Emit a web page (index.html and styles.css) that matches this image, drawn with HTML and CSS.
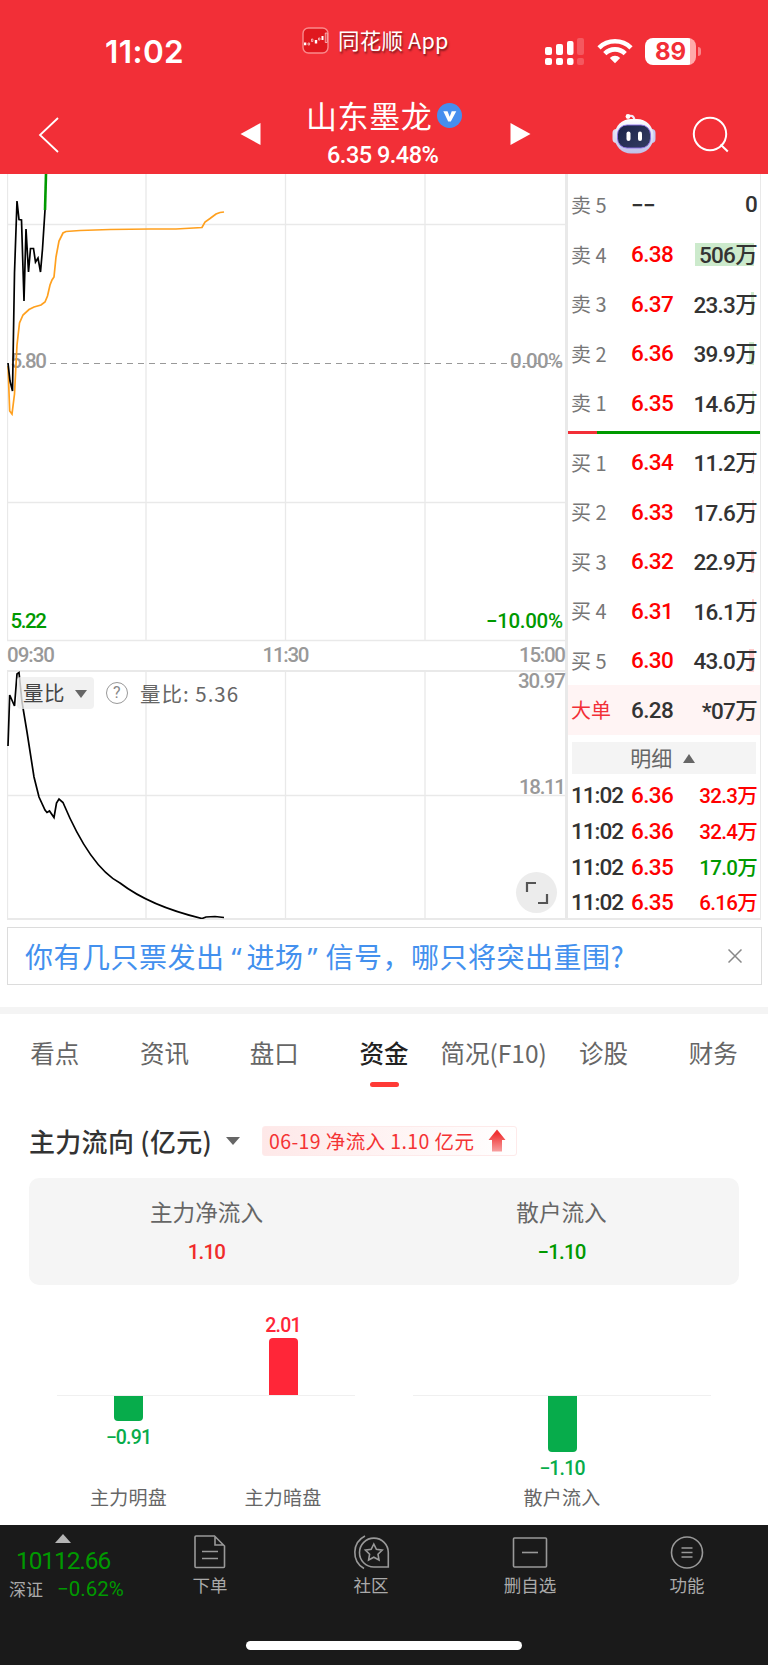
FILE: index.html
```html
<!DOCTYPE html>
<html lang="zh-CN">
<head>
    <meta charset="UTF-8">
    <meta name="viewport" content="width=device-width, initial-scale=1.0">
    <title>山东墨龙 6.35 9.48%</title>
    <link rel="stylesheet" href="styles.css">
</head>
<body>
    <header class="header">
        <div class="status-bar">
            <span class="clock">11:02</span>
            <div class="app-mark">
                <svg width="27" height="27" viewBox="0 0 27 27">
                    <rect x="1" y="1" width="25" height="25" rx="5.5" fill="#e0181f" stroke="#fa8a8c" stroke-width="1.4"/>
                    <path d="M2 15.500h2.300v2.800H2zM12.800 13h2.400v3.600h-2.400zM19.500 9h2v4h-2z" fill="#fff"/>
                    <path d="M6 16h1.600v2H6zM9.500 12h1.400v2.500H9.500zM16.500 11h1.500v2h-1.500zM23.300 6h1.800v9.500h-1.800z" fill="none" stroke="#fff" stroke-width=".6"/>
                </svg>
                <span>同花顺 App</span>
            </div>
            <div class="status-icons">
                <svg class="signal" width="40" height="28" viewBox="0 0 40 28" fill="#fff">
                    <rect x="0" y="9" width="7" height="8" rx="2"/>
                    <rect x="11" y="6" width="7" height="11" rx="2"/>
                    <rect x="22" y="3" width="6.500" height="14" rx="2"/>
                    <rect x="32" y="0" width="7" height="17" rx="2" opacity=".2"/>
                    <rect x="0" y="20" width="7" height="7" rx="2"/>
                    <rect x="11" y="20" width="7" height="7" rx="2"/>
                    <rect x="22" y="20" width="6.500" height="7" rx="2"/>
                    <rect x="32" y="20" width="7" height="7" rx="2" opacity=".2"/>
                </svg>
                <svg class="wifi" width="36" height="26" viewBox="0 0 36 26" fill="none" stroke="#fff" stroke-width="4.600">
                    <path d="M2 9.800a23 23 0 0 1 32 0"/>
                    <path d="M7.800 15.600a14.500 14.500 0 0 1 20.400 0"/>
                    <path d="M18 25.300l-5.200-5.400a7.500 7.500 0 0 1 10.400 0z" fill="#fff" stroke="none"/>
                </svg>
                <div class="battery">89</div>
                <span class="battery-tip"></span>
            </div>
        </div>
        <nav class="nav-bar">
            <svg class="back" width="22" height="38" viewBox="0 0 22 38" fill="none" stroke="#fff" stroke-width="1.800"><path d="M20 2L2 19l18 17"/></svg>
            <svg class="prev" width="21" height="24" viewBox="0 0 21 24" fill="#fff"><path d="M20.500 1v22L.5 12z"/></svg>
            <div class="stock">
                <div class="stock-name">山东墨龙
                    <svg width="25" height="25" viewBox="0 0 25 25"><circle cx="12.500" cy="12.500" r="12.500" fill="#468eee"/><path d="M6.300 8.300h4.200l2.200 5.500 2-5.500h4.600l-5.500 10.300h-2.600z" fill="#fff"/></svg>
                </div>
                <div class="stock-price">6.35 9.48%</div>
            </div>
            <svg class="next" width="21" height="24" viewBox="0 0 21 24" fill="#fff"><path d="M.5 1v22l20-11z"/></svg>
            <svg class="robot" width="44" height="42" viewBox="0 0 44 42">
                <defs>
                    <linearGradient id="shell" x1="0" y1="0" x2="0" y2="1"><stop offset="0" stop-color="#fff"/><stop offset="1" stop-color="#bfbfe8"/></linearGradient>
                    <linearGradient id="face" x1="0" y1="0" x2="1" y2="1"><stop offset="0" stop-color="#1b2348"/><stop offset="1" stop-color="#343c63"/></linearGradient>
                </defs>
                <path d="M16 3.500c3-1.500 6-1 6.500 4" fill="none" stroke="#f2e9f7" stroke-width="2.200"/>
                <circle cx="16" cy="3.500" r="2.400" fill="#fff"/>
                <rect x=".5" y="16" width="8" height="14" rx="4" fill="#dcdcf2"/>
                <rect x="35.500" y="16" width="8" height="14" rx="4" fill="#c6c9f2"/>
                <rect x="2.500" y="6" width="39" height="34.500" rx="16.500" fill="url(#shell)"/>
                <rect x="5.500" y="12" width="33" height="23" rx="9.500" fill="url(#face)" stroke="#8d71e8" stroke-width=".9"/>
                <rect x="14.500" y="18.500" width="4" height="9.500" rx="2" fill="#fff"/>
                <rect x="26" y="18.500" width="4" height="9.500" rx="2" fill="#fff"/>
            </svg>
            <svg class="search" width="38" height="38" viewBox="0 0 38 38" fill="none" stroke="#fff" stroke-width="2"><circle cx="18" cy="18" r="16.200"/><path d="M28.500 28.500l7.300 7"/></svg>
        </nav>
    </header>

    <main>
        <section class="quote">
            <svg class="chart" width="560" height="745" viewBox="7 174 560 745">
                <!-- grid -->
                <g class="grid">
                    <path d="M7.500 174V641M146 174V641M285.500 174V641M425 174V641M7 224.500H566M7 502.500H566M7 640.500H566"/>
                    <path d="M7.500 671V919M146 671V919M285.500 671V919M425 671V919M7 795.500H566"/>
                    <path class="grid-bold" d="M7 671H566M566 174V919"/>
                </g>
                <path class="dash" d="M50 363.500H566"/>

                <text class="num muted" x="10.500" y="367.500" textLength="36.500">5.80</text>
                <text class="num muted" x="563" y="367.500" text-anchor="end" textLength="53">0.00%</text>
                <text class="num down" x="10.500" y="628" textLength="36.500">5.22</text>
                <text class="num down" x="563" y="628" text-anchor="end" textLength="77">−10.00%</text>
                <text class="num muted" x="7" y="662" textLength="48">09:30</text>
                <text class="num muted" x="262.500" y="662" textLength="47">11:30</text>
                <text class="num muted" x="566" y="662" text-anchor="end" textLength="47">15:00</text>
                <text class="num muted" x="566" y="688" text-anchor="end" textLength="48">30.97</text>
                <text class="num muted" x="566" y="793.500" text-anchor="end" textLength="47">18.11</text>

                <!-- price and average -->
                <polyline class="average" points="8,366 9.700,411 12,414 14.500,394 17,345 19.500,323 23,315 29,309.500 34,307 41,305 45,302 47.500,296 50,285 52,280 54,277 56,257 59,241 63,233 66,231.500 80,230.500 110,229.500 150,229 176,229 202,227.500 205,222 210,218.500 216,214 220,212.500 224,212"/>
                <polyline class="price" points="8,363 10,381 12.500,391 14.500,273 17,201 19,219.500 21.500,220 24,301 26,229 28.500,272 30.500,248.500 33.500,248.500 35.500,262 38,258 40.500,272 42.500,249 45,210"/>
                <path class="limit" d="M45 210L46 174"/>

                <!-- volume ratio -->
                <path class="ratio" d="M8 746L9.700 695L14.500 706L17 674L19 672.500L22 702L27 732L34 777L39 797L45 810L47 812.500L49.500 811L54 817.500L56.500 803L59 799L63 802.500Q90 867 120 883Q150 906 202 918.500L206 917L215 916.500L224 917.500" />
            </svg>
            <div class="chart-tools">
                <span class="picker">量比 <i class="caret"></i></span>
                <span class="help">?</span>
                <span class="reading">量比: 5.36</span>
            </div>
            <span class="expand">
                <svg width="24" height="24" viewBox="0 0 24 24" fill="none" stroke="#555" stroke-width="2.200"><path d="M2 11V2h9M22 13v9h-9"/></svg>
            </span>

            <div class="book">
                <div class="row"><span>卖 5</span><b class="dark">−−</b><em>0</em></div>
                <div class="row"><span>卖 4</span><b>6.38</b><em><i class="bar sell" style="width:59px"></i>506万</em></div>
                <div class="row"><span>卖 3</span><b>6.37</b><em><i class="bar sell" style="width:3px"></i>23.3万</em></div>
                <div class="row"><span>卖 2</span><b>6.36</b><em><i class="bar sell" style="width:5px"></i>39.9万</em></div>
                <div class="row"><span>卖 1</span><b>6.35</b><em><i class="bar sell" style="width:2px"></i>14.6万</em></div>
                <div class="ratio-line"></div>
                <div class="row"><span>买 1</span><b>6.34</b><em><i class="bar buy" style="width:1px"></i>11.2万</em></div>
                <div class="row"><span>买 2</span><b>6.33</b><em><i class="bar buy" style="width:2px"></i>17.6万</em></div>
                <div class="row"><span>买 3</span><b>6.32</b><em><i class="bar buy" style="width:3px"></i>22.9万</em></div>
                <div class="row"><span>买 4</span><b>6.31</b><em><i class="bar buy" style="width:2px"></i>16.1万</em></div>
                <div class="row"><span>买 5</span><b>6.30</b><em><i class="bar buy" style="width:5px"></i>43.0万</em></div>
                <div class="row big"><span>大单</span><b class="dark">6.28</b><em>*07万</em></div>
                <div class="detail">明细 <i class="caret up"></i></div>
                <div class="trade"><span>11:02</span><b>6.36</b><em>32.3万</em></div>
                <div class="trade"><span>11:02</span><b>6.36</b><em>32.4万</em></div>
                <div class="trade"><span>11:02</span><b>6.35</b><em class="sold">17.0万</em></div>
                <div class="trade"><span>11:02</span><b>6.35</b><em>6.16万</em></div>
            </div>
        </section>

        <div class="notice">
            <span>你有几只票发出<q class="open">“</q>进场<q class="close">”</q>信号，哪只将突出重围?</span>
            <svg width="14" height="14" viewBox="0 0 14 14" stroke="#888" stroke-width="1.500"><path d="M.5.5l13 13M13.500.5l-13 13"/></svg>
        </div>

        <div class="tabs">
            <a>看点</a><a>资讯</a><a>盘口</a><a class="active">资金</a><a>简况(F10)</a><a>诊股</a><a>财务</a>
        </div>

        <section class="flow">
            <div class="flow-head">
                <h2>主力流向 (亿元)</h2>
                <i class="caret"></i>
                <div class="tag">06-19 净流入 1.10 亿元
                    <svg width="18" height="23" viewBox="0 0 18 23">
                        <defs><linearGradient id="rise" x1="0" y1="0" x2="0" y2="1"><stop offset=".2" stop-color="#f03334"/><stop offset="1" stop-color="#f7a0a0"/></linearGradient></defs>
                        <path d="M9 .5L17.500 11H14v11.500H4V11H.5z" fill="url(#rise)"/>
                    </svg>
                </div>
            </div>
            <div class="summary">
                <div>主力净流入<strong class="in">1.10</strong></div>
                <div>散户流入<strong class="out">−1.10</strong></div>
            </div>
            <div class="bars">
                <div class="group pair">
                    <div class="col"><div class="above"></div><div class="below"><i style="height:25px"></i>−0.91</div><label>主力明盘</label></div>
                    <div class="col hidden-side"><div class="above">2.01<i style="height:57px"></i></div><div class="below"></div><label>主力暗盘</label></div>
                </div>
                <div class="group">
                    <div class="col"><div class="above"></div><div class="below"><i style="height:57px"></i>−1.10</div><label>散户流入</label></div>
                </div>
            </div>
        </section>
    </main>

    <footer class="footer">
        <div class="index">
            <i class="caret up"></i>
            <div class="index-value">10112.66</div>
            <div class="index-line"><span>深证</span><b>−0.62%</b></div>
        </div>
        <a class="item order">
            <svg width="36" height="36" viewBox="0 0 36 36"><path d="M4 2h18.500L32.500 12v20.500a1 1 0 0 1-1 1H4a1 1 0 0 1-1-1V3a1 1 0 0 1 1-1zM23 2.500V11h9M10 17.500h16M10 24.500h16"/></svg>
            下单
        </a>
        <a class="item social">
            <svg width="38" height="36" viewBox="0 0 38 36"><path d="M7.500 18.500a14.300 14.300 0 0 1 28.800 0V33H21.800A14.300 14.300 0 0 1 7.500 18.500z"/><path d="M13 2A18.500 18.500 0 0 0 12 34.500"/><path d="M21.800 10l2.600 5.300 5.800.8-4.200 4.100 1 5.800-5.200-2.800-5.200 2.800 1-5.800-4.200-4.100 5.800-.8z"/></svg>
            社区
        </a>
        <a class="item remove">
            <svg width="36" height="36" viewBox="0 0 36 36"><rect x="1.500" y="4" width="33" height="29" rx="1"/><path d="M10 18.500h16"/></svg>
            删自选
        </a>
        <a class="item more">
            <svg width="36" height="36" viewBox="0 0 36 36"><circle cx="18" cy="18.500" r="15.500"/><path d="M12.500 14h11M12.500 18.500h11M12.500 23h11"/></svg>
            功能
        </a>
        <span class="home-bar"></span>
    </footer>
</body>
</html>
```
FILE: styles.css
```css
:root {
    --red: #f22f37;
    --up: #ff0000;
    --down: #009900;
    --text: #333;
    --muted: #666;
    --line: #e9e9e9;
    --cjk: "Noto Sans CJK SC", sans-serif;
    --num: Roboto, "Noto Sans CJK SC", sans-serif;
}

* {
    margin: 0;
    padding: 0;
    box-sizing: border-box;
}

body {
    width: 768px;
    background: #fff;
    color: var(--text);
    font-family: var(--cjk);
}

i, em {
    font-style: normal;
}

svg {
    display: block;
}

.caret {
    display: inline-block;
    border: 6px solid transparent;
    border-top: 8px solid #666;
    border-bottom: 0;
}

.caret.up {
    border-top: 0;
    border-bottom: 9px solid #666;
}

/* header */
.header {
    height: 174px;
    background: var(--red);
    color: #fff;
}

.status-bar {
    display: flex;
    height: 90px;
    padding-left: 105px;
}

.clock {
    width: 197px;
    padding-top: 32px;
    font: 600 31.5px/40px Inter, sans-serif;
    letter-spacing: 0.4px;
}

.app-mark {
    display: flex;
    gap: 9px;
    width: 243px;
    padding-top: 27px;
    font-size: 21.5px;
    line-height: 25px;
    letter-spacing: 0.2px;
    text-shadow: 1px 2px 2px rgba(0,0,0,0.5);
}

.status-icons {
    display: flex;
    align-items: flex-start;
    padding-top: 38px;
}

.wifi {
    margin-left: 12px;
}

.battery {
    width: 51px;
    height: 27px;
    margin-left: 12px;
    border-radius: 8px;
    background: linear-gradient(90deg, #fff 45px, #faa 45px);
    color: var(--red);
    font: 700 24px/28px Inter, sans-serif;
    text-align: center;
}

.battery-tip {
    width: 3px;
    height: 9px;
    margin: 9px 0 0 2px;
    border-radius: 0 4px 4px 0;
    background: #f9868a;
}

.nav-bar {
    display: flex;
    align-items: flex-start;
    height: 84px;
    padding-left: 38px;
}

.back {
    margin-top: 26px;
}

.prev {
    margin: 32px 0 0 180px;
}

.stock {
    width: 249px;
    padding-left: 45px;
}

.stock-name {
    display: flex;
    align-items: center;
    gap: 5px;
    height: 48px;
    font-size: 31px;
    letter-spacing: 0.6px;
    white-space: nowrap;
}

.stock-name svg {
    margin-top: 3px;
}

.stock-price {
    margin: 3px 0 0 21px;
    font: 500 23.5px/28px var(--num);
    letter-spacing: -0.5px;
}

.next {
    margin-top: 32px;
}

.robot {
    margin: 23px 0 0 81px;
}

.search {
    margin: 26px 0 0 36px;
}

/* quote area */
.quote {
    position: relative;
    display: flex;
    height: 746px;
    margin: 0 7px;
    border-bottom: 2px solid var(--line);
}

.chart {
    flex: none;
}

.grid {
    fill: none;
    stroke: var(--line);
    stroke-width: 1.3;
}

.grid-bold {
    stroke-width: 2;
}

.dash {
    stroke: #999;
    stroke-width: 1.2;
    stroke-dasharray: 6 5;
}

.price, .average, .ratio, .limit {
    fill: none;
    stroke: #000;
    stroke-width: 1.7;
}

.average {
    stroke: #ffa01e;
}

.limit {
    stroke: var(--down);
    stroke-width: 2.6;
}

.num {
    font: 500 20.5px var(--num);
}

.num.muted {
    fill: #999;
}

.num.down {
    fill: var(--down);
}

.chart-tools {
    position: absolute;
    left: 10px;
    top: 503px;
    display: flex;
    align-items: center;
    height: 32px;
    color: #666;
    font-size: 20.5px;
    letter-spacing: 0.4px;
}

.picker {
    width: 77px;
    height: 32px;
    padding-left: 6px;
    border-radius: 4px;
    background: rgba(238,238,238,0.8);
    color: #444;
    line-height: 31px;
}

.picker .caret {
    margin-left: 5px;
    vertical-align: 3px;
}

.help {
    width: 22px;
    height: 22px;
    margin: 0 12px;
    border: 1.5px solid #999;
    border-radius: 50%;
    color: #888;
    font: 16px/19px var(--num);
    text-align: center;
}

.reading {
    letter-spacing: 1px;
}

.expand {
    position: absolute;
    left: 509px;
    top: 698px;
    display: grid;
    place-items: center;
    width: 41px;
    height: 41px;
    border-radius: 50%;
    background: #ececec;
}

.book {
    width: 194px;
    padding-top: 6px;
    border-right: 1px solid var(--line);
    border-left: 1px solid var(--line);
    font-family: var(--num);
}

.row, .trade {
    display: grid;
    grid-template-columns: 60px 54px 1fr;
    align-items: center;
    height: 49.5px;
    padding: 0 3px;
    font-size: 22.5px;
    font-weight: 500;
    white-space: nowrap;
}

.row span {
    color: #777;
    font: 20px var(--cjk);
}

.row b, .trade b {
    color: var(--up);
    font-weight: 500;
    letter-spacing: -0.6px;
}

.row b.dark {
    color: var(--text);
}

.row em, .trade em {
    position: relative;
    padding-bottom: 2px;
    text-align: right;
    letter-spacing: -0.7px;
}

.bar {
    position: absolute;
    right: 3px;
    top: 50%;
    height: 23px;
    margin-top: -11.5px;
    z-index: -1;
}

.sell {
    background: #cceacc;
}

.buy {
    background: #fcc;
}

.ratio-line {
    height: 3.5px;
    margin: 3px 0 3.5px;
    background: linear-gradient(90deg, var(--red) 29px, var(--down) 29px);
}

.big {
    background: #fff4f4;
}

.row.big span {
    color: var(--red);
}

.detail {
    height: 32px;
    margin: 7px 4px 4px;
    background: #f4f4f4;
    color: #666;
    font: 21px/31px var(--cjk);
    text-align: center;
    padding-right: 3px;
}

.detail .caret {
    margin-left: 6px;
    vertical-align: 3px;
}

.trade {
    height: 35.7px;
}

.trade span {
    letter-spacing: -1px;
}

.trade em {
    color: var(--up);
    font-size: 20.5px;
}

.trade em.sold {
    color: var(--down);
}

/* notice */
.notice {
    display: flex;
    align-items: center;
    justify-content: space-between;
    height: 58px;
    margin: 7px 6px 22px 7px;
    padding: 0 19px 0 17px;
    border: 1px solid #dcdcdc;
    color: #4390ee;
    font-size: 28px;
    letter-spacing: 0.5px;
    white-space: nowrap;
}

.notice q {
    display: inline-block;
    width: 22px;
    quotes: none;
    font-family: "Noto Sans", sans-serif;
    line-height: 1;
}

.notice q::before, .notice q::after {
    content: none;
}

.notice .open {
    padding-left: 7px;
}

.notice .close {
    padding-left: 4px;
}

/* tabs */
.tabs {
    display: grid;
    grid-template-columns: repeat(7, 1fr);
    height: 96px;
    padding-top: 21px;
    border-top: 7px solid #f4f4f4;
}

.tabs a {
    position: relative;
    color: #666;
    font-size: 24.5px;
    line-height: 36px;
    text-align: center;
    white-space: nowrap;
}

.tabs .active {
    color: #222;
    font-weight: 500;
}

.tabs .active::after {
    content: '';
    position: absolute;
    left: 50%;
    top: 47px;
    width: 29px;
    height: 5px;
    margin-left: -14px;
    border-radius: 3px;
    background: #ff3a36;
}

/* fund flow */
.flow {
    height: 422px;
    padding: 23px 29px 0;
}

.flow-head {
    display: flex;
    align-items: center;
    height: 30px;
}

.flow-head h2 {
    width: 197px;
    padding-bottom: 2px;
    font-size: 26px;
    font-weight: 500;
    letter-spacing: 0.3px;
    white-space: nowrap;
}

.flow-head .caret {
    border-width: 8px 7px 0;
    margin-right: 22px;
}

.tag {
    display: flex;
    align-items: center;
    justify-content: space-between;
    width: 255px;
    height: 30px;
    padding: 0 10px 1px 6px;
    border: 1px solid #feeaea;
    border-radius: 3px;
    background: linear-gradient(90deg, #fee8e8, #fff);
    color: #f43334;
    font-size: 19.5px;
    letter-spacing: 0.4px;
    white-space: nowrap;
}

.summary {
    display: grid;
    grid-template-columns: 1fr 1fr;
    height: 107px;
    margin-top: 22px;
    border-radius: 10px;
    background: #f5f5f5;
    color: #666;
    font-size: 22.6px;
    line-height: 32px;
    text-align: center;
    padding-top: 18px;
}

.summary strong {
    display: block;
    margin-top: 8px;
    font: 500 20.5px/32px var(--num);
    letter-spacing: -0.8px;
}

.in {
    color: #f02b2b;
}

.out {
    color: var(--down);
}

.bars {
    display: grid;
    grid-template-columns: 298px 298px;
    gap: 58px;
    margin: 27px 28px 0;
}

.group {
    display: grid;
}

.pair {
    grid-template-columns: 143px 155px;
}

.col {
    display: grid;
    grid-template-rows: 84px 85px 32px;
    color: #07ac4b;
    font: 500 19.5px/24px var(--num);
    letter-spacing: -0.8px;
    text-align: center;
}

.above, .below {
    display: flex;
    flex-direction: column;
    align-items: center;
}

.above {
    justify-content: flex-end;
    color: #ff2638;
    border-bottom: 1px solid #f0f0f0;
}

.hidden-side > * {
    padding-left: 11px;
}

.bars i {
    width: 29px;
    border-radius: 0 0 4px 4px;
    background: #07ac4b;
}

.below i {
    margin-bottom: 5px;
}

.above i {
    border-radius: 4px 4px 0 0;
    background: #ff2638;
}

.col label {
    color: #666;
    font: 19px/32px var(--cjk);
    letter-spacing: 0.2px;
}

/* footer */
.footer {
    position: relative;
    display: flex;
    height: 140px;
    background: #1a1a1a;
    color: #aaa;
}

.index {
    width: 168px;
    padding: 9px 0 0 9px;
    font: 500 20px/28px var(--num);
    color: var(--down);
}

.index .caret {
    display: block;
    width: 16px;
    margin-left: 46px;
    border-width: 0 8px 9px;
    border-bottom-color: #b4b4b4;
}

.index-value {
    margin: 4px 0 0 7px;
    font-size: 24.5px;
    font-weight: 400;
    letter-spacing: -1.1px;
}

.index-line {
    display: flex;
    gap: 14px;
}

.index-line span {
    color: #aaa;
    font: 17px/28px var(--cjk);
}

.index-line b {
    font-weight: 400;
    font-size: 20.5px;
}

.item {
    display: flex;
    flex-direction: column;
    align-items: center;
    width: 84px;
    margin-right: 77px;
    padding-top: 9px;
    font-size: 17.5px;
    line-height: 30px;
}

.item svg {
    fill: none;
    stroke: #999;
    stroke-width: 1.6;
}

.social {
    margin-right: 75px;
}

.remove {
    margin-right: 73px;
}

.more {
    margin-right: 0;
}

.home-bar {
    position: absolute;
    left: 246px;
    bottom: 15px;
    width: 276px;
    height: 9px;
    border-radius: 5px;
    background: #fff;
}
```
